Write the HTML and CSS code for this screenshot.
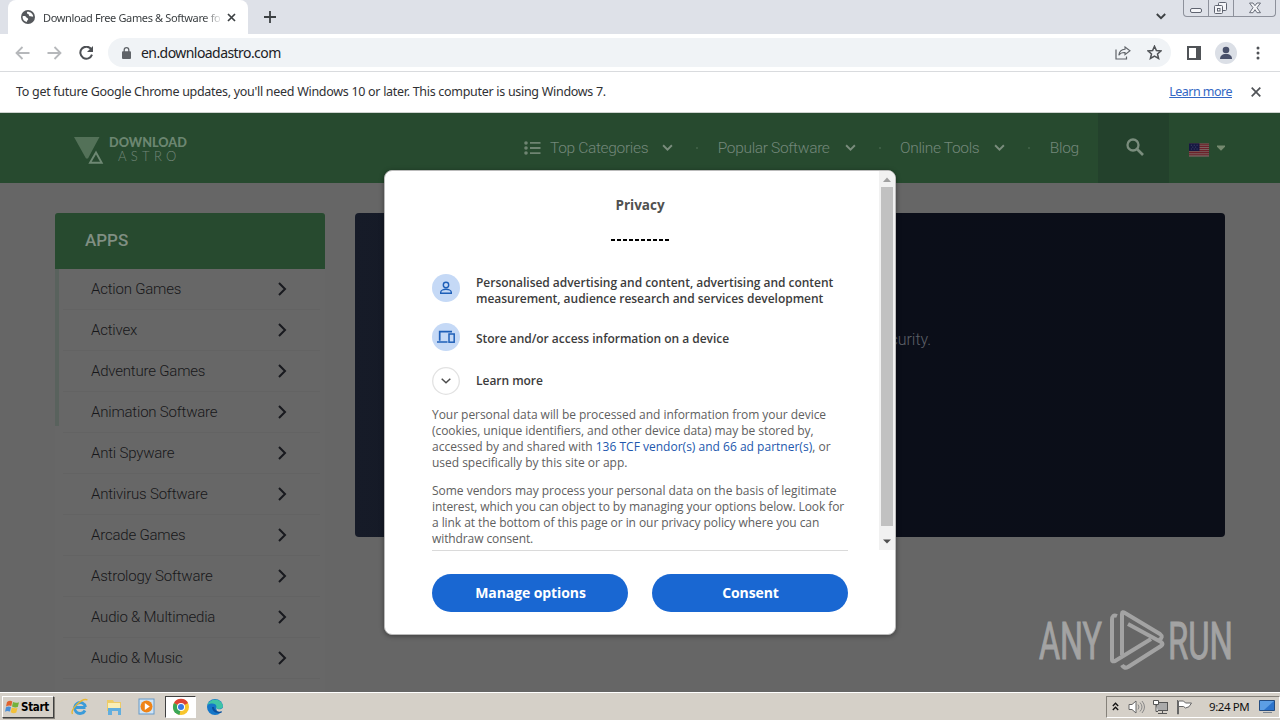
FILE: index.html
```html
<!DOCTYPE html>
<html lang="en">
<head>
<meta charset="utf-8">
<title>Download Free Games &amp; Software</title>
<link rel="stylesheet" href="styles.css">
</head>
<body>
<div class="screen">
  <div class="tabstrip">
    <div class="tab">
      <svg class="globe" width="14" height="14" viewBox="0 0 14 14"><circle cx="7" cy="7" r="7" fill="#55585c"/><path d="M1.500 6.500c1.500-.8 3.300-.3 3.800.7.300 1 1.800.7 1.900 1.900 0 1.200-1.300 1.300-1.400 2.900C3.200 11.400 1.500 9.500 1.500 6.500zM6 1.900c-.5 1.600.6 1.900 1.500 2.100.3 1.800 1.200 2.600 2.500 2.300.8.500 1.300.4 2.200.2-.200-2.500-2.900-5-6.200-4.600z" fill="#fff"/></svg>
      <span class="tab-title">Download Free Games &amp; Software fo</span>
      <svg class="tab-close" width="9" height="9" viewBox="0 0 9 9"><path d="M1 1l7 7M8 1L1 8" stroke="#3c4043" stroke-width="1.700"/></svg>
    </div>
    <svg class="plus" width="12" height="12" viewBox="0 0 12 12"><path d="M6 0v12M0 6h12" stroke="#3c4043" stroke-width="1.800"/></svg>
    <svg class="tab-menu" width="10" height="7" viewBox="0 0 10 7"><path d="M.8 1L5 5.200 9.200 1" fill="none" stroke="#3c4043" stroke-width="1.900"/></svg>
    <div class="winbtns">
      <span><svg width="25" height="17"><rect x="6.500" y="8.500" width="11" height="4" rx="1.500" fill="#f4f5f8" stroke="#5f6470"/></svg></span>
      <span><svg width="25" height="17"><rect x="9.500" y="2.500" width="8" height="8" rx="1" fill="#f4f5f8" stroke="#5f6470"/><rect x="5.500" y="5.500" width="8" height="8" rx="1" fill="#f4f5f8" stroke="#5f6470"/><rect x="8.500" y="8.500" width="2.500" height="2.500" fill="#fff" stroke="#5f6470"/></svg></span>
      <span class="wide"><svg width="41" height="17"><path d="M15.500 3h3.500l2 2.700L23 3h3.500l-3.500 4.700 3.500 5H23l-2-3-2 3h-3.500l3.500-5z" fill="#f4f5f8" stroke="#6a6f7a"/></svg></span>
    </div>
  </div>
  <div class="toolbar">
    <svg class="nav" width="15" height="14" viewBox="0 0 15 14"><path d="M14.500 7H1.500M7.500 1l-6 6 6 6" fill="none" stroke="#b6b8bb" stroke-width="1.800"/></svg>
    <svg class="nav" width="15" height="14" viewBox="0 0 15 14"><path d="M.5 7h13M7.500 1l6 6-6 6" fill="none" stroke="#b6b8bb" stroke-width="1.800"/></svg>
    <svg class="nav" width="15" height="14" viewBox="0 0 15 14"><path d="M12.300 3.300A6 6 0 1 0 13 8.700" fill="none" stroke="#4d5054" stroke-width="2"/><path d="M14 0v6H8z" fill="#4d5054"/></svg>
    <div class="omnibox">
      <svg width="9" height="12" viewBox="0 0 9 12"><rect y="4.300" width="9" height="7.700" rx="1" fill="#5f6368"/><path d="M2.200 5V3a2.300 2.300 0 0 1 4.600 0v2" fill="none" stroke="#5f6368" stroke-width="1.300"/></svg>
      <span class="url">en.downloadastro.com</span>
      <svg class="share" width="16" height="14" viewBox="0 0 16 14"><path d="M1 3.500V13h10.500v-2.500" fill="none" stroke="#5f6368" stroke-width="1.200"/><path d="M10 1l5 3.800-5 3.900V6.500C7 6.400 5 7.300 3.800 9.200 4.200 6 6.200 3.500 10 3.200z" fill="none" stroke="#5f6368" stroke-width="1.100"/></svg>
      <svg width="15" height="15" viewBox="0 0 15 15"><path d="M7.500 1.200l1.900 4.300 4.600.4-3.500 3 1.100 4.600-4.100-2.400-4.100 2.400 1.100-4.600-3.500-3 4.600-.4z" fill="none" stroke="#505357" stroke-width="1.500"/></svg>
    </div>
    <svg class="panel" width="14" height="14" viewBox="0 0 14 14"><path d="M1 1h12v12H1z" fill="none" stroke="#505357" stroke-width="2"/><path d="M9 1h4v12H9z" fill="#505357"/></svg>
    <svg class="avatar" width="22" height="22" viewBox="0 0 22 22"><circle cx="11" cy="11" r="11" fill="#dbdfe6"/><circle cx="11" cy="8" r="3.300" fill="#48506a"/><path d="M5 17c0-3 2-5 6-5s6 2 6 5z" fill="#48506a"/></svg>
    <svg class="dots" width="4" height="14" viewBox="0 0 4 14"><g fill="#505357"><circle cx="2" cy="2" r="1.500"/><circle cx="2" cy="7" r="1.500"/><circle cx="2" cy="12" r="1.500"/></g></svg>
  </div>
  <div class="infobar">
    <span class="info-text">To get future Google Chrome updates, you'll need Windows 10 or later. This computer is using Windows 7.</span>
    <a class="info-link">Learn more</a>
    <svg width="10" height="10" viewBox="0 0 10 10"><path d="M.7.700l8.600 8.600M9.300.700L.7 9.300" stroke="#505357" stroke-width="1.700"/></svg>
  </div>
  <div class="page">
    <div class="header">
      <div class="logo">
        <svg width="30" height="28" viewBox="0 0 30 28"><path d="M0 0h25.500L19 12l-5 9.500h-2z" fill="#537158"/><path d="M22 12.500L30 27.500H13.500z" fill="#27492f"/><path d="M22 15.500l5.700 10.200H16z" fill="none" stroke="#6e8873" stroke-width="1.900"/></svg>
        <div class="logo-text"><b>DOWNLOAD</b><i>ASTRO</i></div>
      </div>
      <nav class="menu">
        <svg class="list" width="17" height="14" viewBox="0 0 17 14"><g fill="#6f8472"><circle cx="2" cy="2" r="1.800"/><circle cx="2" cy="7" r="1.800"/><circle cx="2" cy="12" r="1.800"/><path d="M6 1h10.500v1.800H6zM6 6.100h10.500v1.800H6zM6 11.200h10.500V13H6z"/></g></svg>
        <span class="m1">Top Categories</span><svg class="chev" viewBox="0 0 10 7"><path d="M1 1l4 4 4-4"/></svg><em></em>
        <span class="m2">Popular Software</span><svg class="chev" viewBox="0 0 10 7"><path d="M1 1l4 4 4-4"/></svg><em></em>
        <span class="m3">Online Tools</span><svg class="chev" viewBox="0 0 10 7"><path d="M1 1l4 4 4-4"/></svg><em></em>
        <span class="m4">Blog</span>
      </nav>
      <div class="search"><svg width="18" height="18" viewBox="0 0 18 18"><circle cx="7" cy="7" r="5.500" fill="none" stroke="#7a8d7d" stroke-width="2.300"/><path d="M11 11l6 6" stroke="#7a8d7d" stroke-width="2.600"/></svg></div>
      <div class="lang">
        <svg class="flag" width="20" height="14" viewBox="0 0 21 14"><rect width="21" height="14" fill="#79615f"/><path d="M0 1h21M0 3.200h21M0 5.400h21M0 7.600h21M0 9.800h21M0 12h21" stroke="#6c2029" stroke-width="1.200"/><rect width="11" height="8" fill="#151842"/><path d="M2 2h1M5 2h1M8 2h1M3.500 4h1M6.500 4h1M2 6h1M5 6h1M8 6h1" stroke="#4c4e6d"/></svg>
        <svg width="8" height="6" viewBox="0 0 8 6"><path d="M0 .500h8v1.300L4 5.800 0 1.800z" fill="#74896f"/></svg>
      </div>
    </div>
    <div class="content">
      <div class="side">
        <div class="side-head">APPS</div>
        <div class="side-list">
          <div class="row"><span>Action Games</span><svg viewBox="0 0 9 14"><path d="M1 1l6 6-6 6"/></svg></div>
          <div class="row"><span>Activex</span><svg viewBox="0 0 9 14"><path d="M1 1l6 6-6 6"/></svg></div>
          <div class="row"><span>Adventure Games</span><svg viewBox="0 0 9 14"><path d="M1 1l6 6-6 6"/></svg></div>
          <div class="row"><span>Animation Software</span><svg viewBox="0 0 9 14"><path d="M1 1l6 6-6 6"/></svg></div>
          <div class="row"><span>Anti Spyware</span><svg viewBox="0 0 9 14"><path d="M1 1l6 6-6 6"/></svg></div>
          <div class="row"><span>Antivirus Software</span><svg viewBox="0 0 9 14"><path d="M1 1l6 6-6 6"/></svg></div>
          <div class="row"><span>Arcade Games</span><svg viewBox="0 0 9 14"><path d="M1 1l6 6-6 6"/></svg></div>
          <div class="row"><span>Astrology Software</span><svg viewBox="0 0 9 14"><path d="M1 1l6 6-6 6"/></svg></div>
          <div class="row"><span>Audio &amp; Multimedia</span><svg viewBox="0 0 9 14"><path d="M1 1l6 6-6 6"/></svg></div>
          <div class="row"><span>Audio &amp; Music</span><svg viewBox="0 0 9 14"><path d="M1 1l6 6-6 6"/></svg></div>
        </div>
      </div>
      <div class="hero"><span>security.</span></div>
    </div>
    <div class="dialog">
      <div class="scroller">
        <div class="body">
          <h1>Privacy</h1>
          <div class="dashes"></div>
          <div class="item first">
            <svg width="28" height="28" viewBox="0 0 28 28"><circle cx="14" cy="14" r="14" fill="#c5d9f6"/><circle cx="14" cy="11" r="2.700" fill="none" stroke="#1e5fb8" stroke-width="1.400"/><path d="M8.700 19.300v-1c0-2 3-3 5.300-3s5.300 1 5.300 3v1z" fill="none" stroke="#1e5fb8" stroke-width="1.400"/></svg>
            <p>Personalised advertising and content, advertising and content<br>measurement, audience research and services development</p>
          </div>
          <div class="item second">
            <svg width="28" height="28" viewBox="0 0 28 28"><circle cx="14" cy="14" r="14" fill="#c5d9f6"/><path d="M20 8.700H7.700v9M5 19h10.500" fill="none" stroke="#1e5fb8" stroke-width="1.700"/><rect x="17" y="11" width="5.200" height="8.200" fill="none" stroke="#1e5fb8" stroke-width="1.500"/></svg>
            <p>Store and/or access information on a device</p>
          </div>
          <div class="item third">
            <svg width="28" height="28" viewBox="0 0 28 28"><circle cx="14" cy="14" r="13.300" fill="#fff" stroke="#e2e2e2" stroke-width="1.300"/><path d="M9.700 11.800l4.300 4 4.300-4" fill="none" stroke="#4c4c4c" stroke-width="1.500"/></svg>
            <p>Learn more</p>
          </div>
          <p class="para"><span class="p1">Your personal data will be processed and information from your device</span><br><span class="p2">(cookies, unique identifiers, and other device data) may be stored by,</span><br><span class="p3">accessed by and shared with <a>136 TCF vendor(s) and 66 ad partner(s)</a>, or</span><br><span class="p4">used specifically by this site or app.</span></p>
          <p class="para"><span class="p5">Some vendors may process your personal data on the basis of legitimate</span><br><span class="p6">interest, which you can object to by managing your options below. Look for</span><br><span class="p7">a link at the bottom of this page or in our privacy policy where you can</span><br><span class="p8">withdraw consent.</span></p>
        </div>
        <div class="bar">
          <svg width="16" height="16" viewBox="0 0 16 16"><path d="M4 11l4-4.500 4 4.500z" fill="#a0a0a0"/></svg>
          <div class="thumb"></div>
          <svg width="16" height="16" viewBox="0 0 16 16"><path d="M4 5.500h8L8 9.500z" fill="#4f4f4f"/></svg>
        </div>
      </div>
      <div class="buttons"><button>Manage options</button><button>Consent</button></div>
    </div>
    <svg class="watermark" width="194" height="64" viewBox="0 0 194 64">
      <g fill="#a3a3a3" stroke="#a3a3a3" stroke-width="1" font-family="Roboto, 'Liberation Sans', sans-serif" font-weight="400" font-size="51">
        <text x="1" y="49.500" textLength="63" lengthAdjust="spacingAndGlyphs">ANY</text>
        <text x="130" y="49.500" textLength="65" lengthAdjust="spacingAndGlyphs">RUN</text>
      </g>
      <g fill="none" stroke="#a3a3a3" stroke-width="4" stroke-linejoin="round">
        <path d="M79 8q-5-2-5 4v40q0 2 3 1l36-22" transform="translate(0 -1)"/>
        <path d="M84 47V6q0-3 3-1l35 21q4 3-1 6" transform="translate(0 -1)"/>
        <path d="M90 16l33 18q3 2 0 4L90 59q-4 2-6-2" transform="translate(0 -1)"/>
      </g>
    </svg>
  </div>
  <div class="taskbar">
    <div class="start">
      <svg width="15" height="14" viewBox="0 0 15 14"><path d="M2 2q3-2 5.300-.5L6.300 6Q4 5 1 6.400z" fill="#e0632f"/><path d="M8 2q3 1.500 6 .2L12.800 7Q10 8 7 6.500z" fill="#74b23c"/><path d="M1 7.300Q3.500 6 6 7l-1 4.500q-3-1.300-5 .2z" fill="#4a8fd8"/><path d="M6.800 7.500q3 1.400 5.700.4l-1.200 4.700Q8.500 14 5.700 12.300z" fill="#f3c13a"/></svg>
      <b>Start</b>
    </div>
    <div class="apps">
      <svg width="18" height="18" viewBox="0 0 18 18"><path d="M14.500 9.500H5M14 12.500A5.500 5.500 0 1 1 14.500 9" fill="none" stroke="#3b9bd9" stroke-width="2.900"/><path d="M1.500 16C-1 12 11-1 16.500 2" fill="none" stroke="#e8b731" stroke-width="1.400"/></svg>
      <svg width="18" height="18" viewBox="0 0 18 18"><path d="M2 2h6l1 2h7v9H2z" fill="#edcb67"/><path d="M3 5h12v5H3z" fill="#faeeb5"/><path d="M3 17V10h13v7h-3v-4H7v4z" fill="#61aede"/></svg>
      <svg width="18" height="18" viewBox="0 0 18 18"><rect x="1" y="1" width="15" height="15" fill="#cfe5f7" stroke="#6699c8"/><circle cx="8.500" cy="8.500" r="6" fill="#ef8417"/><path d="M6.800 5l5 3.500-5 3.500z" fill="#fff"/></svg>
      <div class="active"><svg width="18" height="18" viewBox="0 0 18 18"><circle cx="9" cy="9" r="8" fill="#f8c62d"/><path d="M9 9L2 5a8 8 0 0 1 14 0z" fill="#de4436"/><path d="M9 9l-1.500 7.900A8 8 0 0 1 2 5z" fill="#3aa757"/><circle cx="9" cy="9" r="4" fill="#fff"/><circle cx="9" cy="9" r="3" fill="#3979e5"/></svg></div>
      <svg width="18" height="18" viewBox="0 0 18 18"><circle cx="9" cy="9" r="8" fill="#1577c9"/><path d="M1.500 7C3 .5 15-1 17 8c0 3-5 4-7 2 2-4-4-6-8.500-3z" fill="#3fc4a6"/><path d="M7 9c0 4 4 6 8.500 4.500" fill="none" stroke="#0c4f9c" stroke-width="2"/><path d="M10 10c2 2 6 1.500 7-.5v3q-3 2-6 .5z" fill="#d5d0c7"/></svg>
    </div>
    <div class="tray">
      <svg width="7" height="9" viewBox="0 0 7 9"><path d="M.8 4L3.500 1.200 6.200 4M.8 8l2.700-2.800L6.200 8" fill="none" stroke="#111" stroke-width="1.300"/></svg>
      <svg width="17" height="16" viewBox="0 0 17 16"><path d="M1 5.500h3L8 2v12l-4-3.500H1z" fill="#fff" stroke="#666"/><path d="M10 5.500q2 2.500 0 5M12 3.500q4 4.500 0 9M14 2q5 6 0 12" fill="none" stroke="#888"/></svg>
      <svg width="17" height="16" viewBox="0 0 17 16"><rect x="4.500" y="3.500" width="11" height="8" fill="#aaa" stroke="#555"/><path d="M6 14.500h9M10.500 12v2" stroke="#555"/><path d="M1.500 1.500h5v4h-5zM4 6v6.500h2" fill="#fff" stroke="#555"/></svg>
      <svg width="17" height="16" viewBox="0 0 17 16"><path d="M1.500 1v14h1V2h5l2 2h6q-2 5-6 5l-2-1.500h-5" fill="#fff" stroke="#666"/></svg>
      <span>9:24 PM</span>
      <svg width="16" height="14" viewBox="0 0 16 14"><path d="M.500.500h15v10H.5z" fill="#2d74cc" stroke="#244c80"/><path d="M1 1h14L5 10H1z" fill="#5c9ee4"/><path d="M4 12.500h9" stroke="#7c8590"/></svg>
    </div>
  </div>
</div>
</body>
</html>
```
FILE: styles.css
```css
* { box-sizing: border-box; }
body { margin: 0; overflow: hidden; }
svg { display: block; flex: none; }
.screen { width: 1280px; height: 720px; display: flex; flex-direction: column; overflow: hidden; font-family: "DejaVu Sans Condensed", "DejaVu Sans", sans-serif; white-space: nowrap; }

.tabstrip { height: 34px; background: #dee1e8; display: flex; flex: none; padding-left: 8px; }
.tab { width: 240px; height: 34px; background: #fff; border-radius: 8px 8px 0 0; display: flex; align-items: center; padding-left: 13px; }
.tab-title { width: 177px; margin: 0 7px 0 8px; font: 11px "Noto Sans", sans-serif; letter-spacing: -.36px; color: #3c4043; -webkit-mask-image: linear-gradient(90deg, #000 160px, transparent 180px); mask-image: linear-gradient(90deg, #000 160px, transparent 180px); }
.plus { margin: 11px 0 0 16px; }
.tab-menu { margin: 13px 17px 0 auto; }
.winbtns { display: flex; height: 17px; width: 93px; margin-right: 4px; border: 1px solid #8d919b; border-top: 0; border-radius: 0 0 4px 4px; }
.winbtns span { width: 25px; overflow: hidden; border-right: 1px solid #8d919b; }
.winbtns .wide { width: 41px; border: 0; }

.toolbar { height: 38px; flex: none; background: #fff; border-bottom: 1px solid #d9dbde; display: flex; align-items: center; padding-left: 15px; }
.nav { margin-right: 17px; }
.omnibox { width: 1063px; height: 29px; margin-left: -3px; border-radius: 15px; background: #f0f3f6; display: flex; align-items: center; padding: 0 9px 0 14px; }
.url { font: 14px "Noto Sans", sans-serif; color: #202124; margin-left: 10px; letter-spacing: -.56px; }
.share { margin: 0 16px 0 auto; }
.panel { margin-left: 16px; }
.avatar { margin-left: 14px; }
.dots { margin-left: 19px; }
.infobar { height: 41px; flex: none; background: #fff; border-bottom: 1px solid #ced3cf; padding: 0 19px 0 16px; display: flex; align-items: center; font: 12.5px "Noto Sans", sans-serif; letter-spacing: -.295px; color: #303134; }
.info-text, .info-link { margin-bottom: 2px; }
.info-link { margin-right: 19px; margin-left: auto; letter-spacing: -.52px; color: #3367c4; text-decoration: underline; }

.page { height: 579px; flex: none; background: #666; position: relative; overflow: hidden; font-family: Roboto, sans-serif; }
.header { height: 70px; background: #274a2f; display: flex; color: #73877a; font-size: 15.500px; font-weight: 300; }
.logo { width: 450px; padding: 24px 0 0 74px; display: flex; }
.logo-text { margin: -3px 0 0 5px; font-family: Lato, sans-serif; }
.logo-text b { display: block; font-size: 12.700px; line-height: 16px; font-weight: 900; color: #6c8671; }
.logo-text i { display: block; margin-left: 9px; font: 300 13px/13px Lato, sans-serif; letter-spacing: 4.300px; }
.menu { display: flex; align-items: center; width: 648px; padding-left: 74px; letter-spacing: -.33px; }
.menu span { margin-right: 14px; }
.menu .m2 { margin-right: 15px; }
.menu .m3 { margin: 0 15px 0 0; }
.menu .m4 { margin: 0; }
.list { margin-right: 9px; }
.chev { width: 11px; height: 8px; fill: none; stroke: #7a8d7d; stroke-width: 1.700; }
.menu em { width: 2px; height: 2px; margin: 0 19.500px 0 23px; background: #3c5d43; }
.search { width: 71px; background: #23412c; padding: 25px 0 0 28px; }
.lang { display: flex; align-items: center; gap: 8px; padding-left: 20px; }
.flag { margin-top: 3px; }
.content { display: flex; gap: 30px; padding: 30px 55px 0; }
.side { width: 270px; height: 479px; background: #676767; }
.side-head { height: 56px; background: #274a2f; border-radius: 3px 3px 0 0; color: #808f83; font: 500 17px/54px Roboto, sans-serif; padding-left: 30px; }
.side-list { margin-top: -.5px; border-left: 4px solid; border-image: linear-gradient(#59625d 157px, #676767 157px) 1; }
.row { height: 41px; margin: 0 5px 0 4px; padding: 0 33px 0 28px; border-bottom: 1px solid #636363; display: flex; align-items: center; justify-content: space-between; font: 300 15px Roboto, sans-serif; letter-spacing: -.2px; color: #17171a; }
.row svg { width: 9px; height: 14px; fill: none; stroke: #18191e; stroke-width: 2; }
.hero { width: 870px; height: 324px; border-radius: 4px; background: linear-gradient(90deg, #161b28, #0b0e19 62%, #0b0e18); color: #5c5f67; font: 300 16px Roboto, sans-serif; padding: 117px 0 0 518px; }

.dialog { position: absolute; left: 384px; top: 57px; width: 512px; height: 465px; background: #fff; border: 1px solid #bbb; border-radius: 8px; font-family: "Open Sans", "Noto Sans", sans-serif; overflow: hidden; box-shadow: 0 1px 5px #0006; }
.scroller { display: flex; height: 380px; }
.body { width: 494px; padding-left: 47px; overflow: hidden; }
.body h1 { margin: 24px 31px 0 0; font-size: 13.500px; line-height: 20px; font-weight: 700; color: #505050; text-align: center; }
.dashes { width: 58px; height: 2px; margin: 24px 0 34px 179px; background: repeating-linear-gradient(90deg, #000 0 4px, #fff 4px 6px); }
.item { display: flex; gap: 16px; align-items: center; color: #3c3c3c; font-size: 12px; font-weight: 600; line-height: 16px; letter-spacing: -.03px; }
.item p { margin: 0; }
.first { height: 32px; }
.first svg { margin-bottom: 6px; }
.second { height: 28px; margin-top: 16px; }
.third { height: 28px; margin: 16px 0 12px; }
.second p { margin-top: 4px; }
.para { margin: 0 0 12px; font-size: 12px; line-height: 16px; color: #606060; }
.para a { color: #2257ad; }
.p1, .p2 { letter-spacing: -.045px; }
.p3 { letter-spacing: .01px; }
.p4, .p5 { letter-spacing: -.02px; }
.p6 { letter-spacing: -.09px; }
.p7 { letter-spacing: -.07px; }
.p8 { letter-spacing: -.1px; }
.bar { width: 16px; height: 379px; background: #f1f1f1; display: flex; flex-direction: column; justify-content: space-between; }
.thumb { width: 12px; height: 339px; margin: 0 2px 8px; background: #c1c1c1; }
.buttons { display: flex; gap: 24px; width: 416px; margin: -1px 0 0 47px; border-top: 1px solid #dadada; padding-top: 23px; }
.buttons button { width: 196px; height: 38px; border: 0; border-radius: 19px; background: #1967d2; color: #fff; font: 700 14px "Open Sans", sans-serif; letter-spacing: -.08px; padding: 0 0 2px 1px; }
.watermark { position: absolute; left: 1038px; top: 496px; overflow: visible; }

.taskbar { height: 28px; flex: none; background: #d5d0c8; border-top: 1px solid #fff; display: flex; align-items: center; }
.start { width: 52px; height: 22px; margin-left: 2px; border: 1px solid; border-color: #fff #404040 #404040 #fff; box-shadow: 1px 1px #85817a; display: flex; align-items: center; gap: 1px; padding-left: 2px; font-size: 11.500px; letter-spacing: -.3px; }
.apps { display: flex; align-items: center; margin-left: 17px; gap: 15.500px; flex: 1; }
.active { width: 31px; height: 22px; margin: 0 -5px 0 -7px; border: 1px solid; border-color: #404040 #fff #fff #404040; background: #fff; padding: 1px 6px; }
.tray { width: 174px; height: 22px; border: 1px solid; border-color: #85817a #fff #fff #85817a; display: flex; align-items: center; padding-left: 5px; gap: 7px; font: 11.500px "Noto Sans", sans-serif; color: #111; }
.tray svg:nth-of-type(n+2) { margin-left: 2px; }
.tray svg:nth-of-type(n+3) { margin-left: 0; }
.tray span { margin: 0 3px 0 9px; letter-spacing: -.4px; }
```
